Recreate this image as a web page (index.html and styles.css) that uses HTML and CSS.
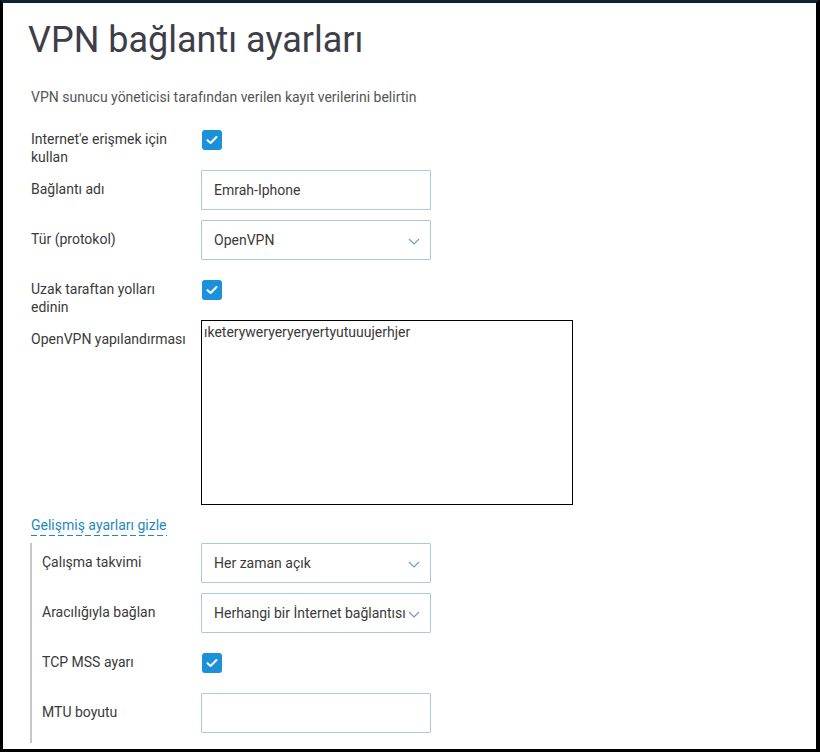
FILE: index.html
```html
<!DOCTYPE html>
<html lang="tr">
<head>
  <meta charset="UTF-8">
  <meta name="viewport" content="width=device-width, initial-scale=1.0">
  <title>VPN bağlantı ayarları</title>
  <link rel="stylesheet" href="styles.css">
</head>
<body>
  <div class="frame">
    <h1 class="title">VPN bağlantı ayarları</h1>
    <p class="hint">VPN sunucu yöneticisi tarafından verilen kayıt verilerini belirtin</p>

    <form class="settings">
      <!-- Use for internet -->
      <div class="row">
        <label class="label">Internet'e erişmek için kullan</label>
        <div class="control">
          <span class="check"><svg width="12" height="10" viewBox="0 0 12 10"><path d="M1.5 5.2 L4.6 8 L10.5 2" fill="none" stroke="#fff" stroke-width="2" stroke-linecap="round" stroke-linejoin="round"/></svg></span>
        </div>
      </div>

      <!-- Connection name -->
      <div class="row">
        <label class="label" for="connName">Bağlantı adı</label>
        <div class="control">
          <input class="field" type="text" id="connName" value="Emrah-Iphone">
        </div>
      </div>

      <!-- Protocol -->
      <div class="row">
        <label class="label">Tür (protokol)</label>
        <div class="control">
          <div class="field select">
            <span>OpenVPN</span>
            <svg class="chevron" width="12" height="7" viewBox="0 0 12 7"><path d="M1 1 L6 6 L11 1" fill="none" stroke="#6e9cbf" stroke-width="1.2"/></svg>
          </div>
        </div>
      </div>

      <!-- Routes -->
      <div class="row">
        <label class="label">Uzak taraftan yolları edinin</label>
        <div class="control">
          <span class="check"><svg width="12" height="10" viewBox="0 0 12 10"><path d="M1.5 5.2 L4.6 8 L10.5 2" fill="none" stroke="#fff" stroke-width="2" stroke-linecap="round" stroke-linejoin="round"/></svg></span>
        </div>
      </div>

      <!-- OpenVPN config -->
      <div class="row row-tall">
        <label class="label" for="ovpnConfig">OpenVPN yapılandırması</label>
        <div class="control">
          <textarea class="config" id="ovpnConfig">ıketeryweryeryeryertyutuuujerhjer</textarea>
        </div>
      </div>

      <a class="toggle" href="#">Gelişmiş ayarları gizle</a>

      <!-- Advanced settings -->
      <div class="advanced">
        <div class="row">
          <label class="label">Çalışma takvimi</label>
          <div class="control">
            <div class="field select">
              <span>Her zaman açık</span>
              <svg class="chevron" width="12" height="7" viewBox="0 0 12 7"><path d="M1 1 L6 6 L11 1" fill="none" stroke="#6e9cbf" stroke-width="1.2"/></svg>
            </div>
          </div>
        </div>

        <div class="row">
          <label class="label">Aracılığıyla bağlan</label>
          <div class="control">
            <div class="field select">
              <span>Herhangi bir İnternet bağlantısı</span>
              <svg class="chevron" width="12" height="7" viewBox="0 0 12 7"><path d="M1 1 L6 6 L11 1" fill="none" stroke="#6e9cbf" stroke-width="1.2"/></svg>
            </div>
          </div>
        </div>

        <div class="row">
          <label class="label">TCP MSS ayarı</label>
          <div class="control">
            <span class="check"><svg width="12" height="10" viewBox="0 0 12 10"><path d="M1.5 5.2 L4.6 8 L10.5 2" fill="none" stroke="#fff" stroke-width="2" stroke-linecap="round" stroke-linejoin="round"/></svg></span>
          </div>
        </div>

        <div class="row">
          <label class="label" for="mtu">MTU boyutu</label>
          <div class="control">
            <input class="field" type="text" id="mtu" value="">
          </div>
        </div>
      </div>
    </form>
  </div>
</body>
</html>
```

FILE: styles.css
```css
/* Page frame */
html, body {
  height: 100%;
}

body {
  margin: 0;
  padding: 0;
  font-family: Roboto, "Liberation Sans", Arial, sans-serif;
  color: #3a3a3a;
  background-color: #000;
}

.frame {
  box-sizing: border-box;
  height: 752px;
  overflow: hidden;
  background-color: #fff;
  border-top: 3px solid #0f2232;
  border-left: 3px solid #000;
  border-right: 4px solid #000;
  border-bottom: 3px solid #000;
}

.title {
  margin: 0;
  padding: 15px 0 0 25px;
  font-size: 36px;
  font-weight: 400;
  line-height: 44px;
  color: #3e3e48;
}

.hint {
  margin: 0;
  padding: 26px 0 0 28px;
  font-size: 14px;
  line-height: 18px;
  color: #555;
}

.settings {
  padding: 14px 0 0 28px;
}

/* Rows */
.row {
  display: flex;
  align-items: flex-start;
  height: 40px;
  margin-bottom: 10px;
}

.row-tall {
  height: 185px;
}

.label {
  flex: 0 0 160px;
  width: 160px;
  margin-right: 10px;
  padding-top: 10px;
  font-size: 14px;
  line-height: 18px;
  color: #3a3a3a;
}

.control {
  flex: 0 0 auto;
}

.field {
  box-sizing: border-box;
  width: 230px;
  height: 40px;
  padding: 0 12px;
  border: 1px solid #a8cadb;
  border-radius: 1px;
  background-color: #fff;
  font-family: Roboto, "Liberation Sans", Arial, sans-serif;
  font-size: 14px;
  color: #3a3a3a;
  outline: none;
}

.select {
  display: flex;
  align-items: center;
  justify-content: space-between;
  padding-right: 10px;
}

.chevron {
  flex: 0 0 auto;
  margin-top: 2px;
}

.check {
  display: flex;
  align-items: center;
  justify-content: center;
  width: 20px;
  height: 20px;
  margin: 10px 0 0 1px;
  border-radius: 3px;
  background-color: #1a91d8;
}

.config {
  box-sizing: border-box;
  display: block;
  width: 372px;
  height: 185px;
  margin: 0;
  padding: 2px 2px;
  border: 1px solid #000;
  resize: none;
  font-family: Roboto, "Liberation Sans", Arial, sans-serif;
  font-size: 14px;
  line-height: 18px;
  color: #3a3a3a;
  outline: none;
}

/* Advanced toggle */
.toggle {
  display: inline-block;
  font-size: 14px;
  line-height: 18px;
  padding-bottom: 2px;
  color: #1f88bd;
  text-decoration: none;
  background: repeating-linear-gradient(to right, #1f88bd 0 6px, transparent 6px 9px) left bottom / 100% 1px no-repeat;
}

.advanced {
  margin: 7px 0 0 -1px;
  padding-left: 10px;
  border-left: 2px solid #c6c6cc;
}

.advanced .row:last-child {
  margin-bottom: 0;
  height: 50px;
}

.advanced .label {
  flex-basis: 149px;
  width: 149px;
}
```
